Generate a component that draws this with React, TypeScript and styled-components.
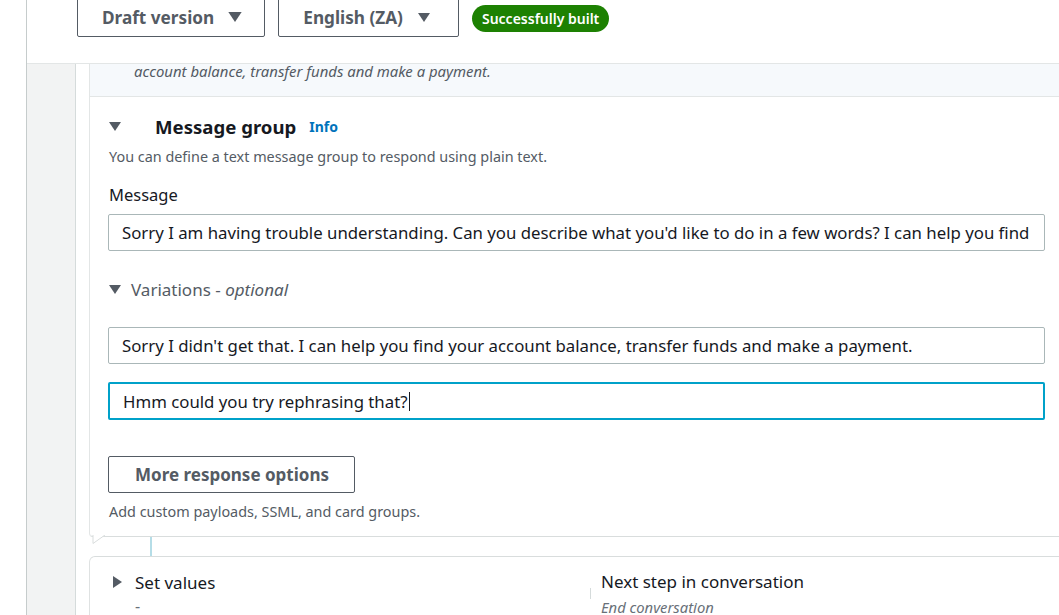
import React from "react";
import styled, { createGlobalStyle } from "styled-components";

const Global = createGlobalStyle`
  html, body { margin: 0; padding: 0; background: #ffffff; overflow: hidden; }
  body { font-family: "Noto Sans", "Open Sans", Arial, sans-serif; color: #16191f; }
  * { box-sizing: border-box; }
`;

const Page = styled.div`
  display: flex;
  width: 1059px;
  height: 615px;
  overflow: hidden;
`;

const LeftMargin = styled.div`
  width: 27px;
  flex: none;
  border-right: 1px solid #c6cccc;
`;

const Main = styled.div`
  display: flex;
  flex-direction: column;
  flex: none;
  width: 1040px;
`;

const Header = styled.div`
  height: 64px;
  flex: none;
  border-bottom: 1px solid #e3e6e6;
  display: flex;
  align-items: flex-start;
  padding-left: 50px;
  gap: 13px;
`;

const Dropdown = styled.div<{ $right: number; $gap: number }>`
  margin-top: -3px;
  height: 40px;
  display: flex;
  align-items: center;
  gap: ${(p) => p.$gap}px;
  padding: 0 ${(p) => p.$right}px 0 24px;
  border: 1px solid #545b64;
  border-radius: 2px;
  font-size: 17.2px;
  font-weight: 700;
  color: #545b64;
`;

const Badge = styled.div`
  margin-top: 5px;
  height: 27px;
  padding: 0 10px;
  display: flex;
  align-items: center;
  border-radius: 14px;
  background: #1d8102;
  color: #ffffff;
  font-size: 14px;
  font-weight: 600;
`;

const Body = styled.div`
  display: flex;
  flex: 1;
  min-height: 0;
`;

const Gutter = styled.div`
  width: 49px;
  flex: none;
  background: #f2f3f3;
  border-right: 1px solid #d5dbdb;
`;

const Content = styled.div`
  margin-left: 13px;
  width: 974px;
  flex: none;
  display: flex;
  flex-direction: column;
  & > * { flex-shrink: 0; }
`;

const PrevSection = styled.div`
  height: 33px;
  background: #f6f9fc;
  border-left: 1px solid #e3e6e6;
  border-bottom: 1px solid #e3e6e6;
  padding-left: 44px;
  font-size: 14.9px;
  font-style: italic;
  color: #545b64;
  line-height: 15px;
`;

const Card = styled.div`
  position: relative;
  display: flex;
  flex-direction: column;
  border-left: 1px solid #e3e6e6;
  border-bottom: 1px solid #d9dddd;
  border-bottom-left-radius: 4px;
  padding: 15px 18px 14px 18px;
`;

const TitleRow = styled.div`
  height: 28px;
  display: flex;
  align-items: center;
`;

const CaretBox = styled.span`
  width: 47px;
  display: inline-flex;
  align-items: center;
  padding-left: 1px;
`;

const Title = styled.span`
  font-size: 18.6px;
  font-weight: 700;
  color: #16191f;
`;

const InfoLink = styled.span`
  margin-left: 13px;
  font-size: 14px;
  font-weight: 700;
  color: #0073bb;
`;

const Description = styled.div<{ $top: number }>`
  margin-top: ${(p) => p.$top}px;
  font-size: 14.4px;
  line-height: 20px;
  color: #545b64;
  padding-left: 1px;
`;

const Label = styled.div`
  margin-top: 16px;
  font-size: 16.5px;
  line-height: 24px;
  padding-left: 1px;
`;

const Field = styled.div<{ $top: number; $focused?: boolean }>`
  margin-top: ${(p) => p.$top}px;
  height: ${(p) => (p.$focused ? 38 : 37)}px;
  display: flex;
  align-items: center;
  padding: 0 13px;
  border: ${(p) => (p.$focused ? "2px solid #00a1c9" : "1px solid #aab7b8")};
  border-radius: 2px;
  font-size: 16.8px;
  color: #16191f;
`;

const FieldText = styled.span`
  display: flex;
  align-items: center;
  flex: 1;
  min-width: 0;
  white-space: nowrap;
  overflow: hidden;
`;

const TextCursor = styled.span`
  display: inline-block;
  flex: none;
  width: 1px;
  height: 19px;
  margin-left: 1px;
  background: #16191f;
`;

const Toggle = styled.div`
  margin-top: 26px;
  height: 24px;
  display: flex;
  align-items: center;
  gap: 10px;
  font-size: 17px;
  color: #545b64;
  padding-left: 1px;
  em { font-style: italic; }
`;

const Button = styled.div`
  margin-top: 36px;
  align-self: flex-start;
  height: 37px;
  padding: 0 25px 0 26px;
  display: flex;
  align-items: center;
  border: 1px solid #545b64;
  border-radius: 2px;
  font-size: 17px;
  font-weight: 700;
  color: #545b64;
`;

const Tail = styled.svg`
  position: absolute;
  left: 2px;
  bottom: -9px;
`;

const Connector = styled.div`
  margin-left: 61px;
  width: 2px;
  height: 19px;
  background: #b5dde7;
`;

const StepCard = styled.div`
  display: grid;
  grid-template-columns: 511px 1fr;
  border-left: 1px solid #dfe2e2;
  border-top: 1px solid #d9dddd;
  border-top-left-radius: 6px;
  padding-top: 13px;
  flex: 1;
`;

const StepColumn = styled.div`
  display: flex;
  flex-direction: column;
  padding-left: 23px;
`;

const StepTitleRow = styled.div`
  height: 24px;
  display: flex;
  align-items: center;
  gap: 13px;
  font-size: 17px;
`;

const StepValue = styled.div<{ $italic?: boolean }>`
  height: 24px;
  line-height: 24px;
  font-size: ${(p) => (p.$italic ? 14.8 : 16)}px;
  font-style: ${(p) => (p.$italic ? "italic" : "normal")};
  color: #687078;
  padding-left: ${(p) => (p.$italic ? 0 : 22)}px;
  margin-top: ${(p) => (p.$italic ? 1 : 0)}px;
`;

const StepLabel = styled.div`
  height: 24px;
  line-height: 24px;
  font-size: 17px;
`;

const ColumnDivider = styled.div`
  position: absolute;
  left: -11px;
  top: 18px;
  width: 1px;
  height: 11px;
  background: #d5dbdb;
`;

const NextColumn = styled.div`
  position: relative;
  display: flex;
  flex-direction: column;
`;

const CaretDown = ({ w = 12 }: { w?: number }) => (
  <svg width={w} height={Math.round(w * 0.72)} viewBox="0 0 12 9">
    <polygon points="0,0 12,0 6,9" fill="#545b64" />
  </svg>
);

const CaretRight = () => (
  <svg width="9" height="12" viewBox="0 0 9 12">
    <polygon points="0,0 9,6 0,12" fill="#545b64" />
  </svg>
);

export default function App() {
  return (
    <>
      <Global />
      <Page>
        <LeftMargin />
        <Main>
          <Header>
            <Dropdown $right={22} $gap={14}>
              <span>Draft version</span>
              <CaretDown w={14} />
            </Dropdown>
            <Dropdown $right={28} $gap={15}>
              <span>English (ZA)</span>
              <CaretDown w={12} />
            </Dropdown>
            <Badge>Successfully built</Badge>
          </Header>
          <Body>
            <Gutter />
            <Content>
              <PrevSection>account balance, transfer funds and make a payment.</PrevSection>
              <Card>
                <TitleRow>
                  <CaretBox>
                    <CaretDown />
                  </CaretBox>
                  <Title>Message group</Title>
                  <InfoLink>Info</InfoLink>
                </TitleRow>
                <Description $top={7}>
                  You can define a text message group to respond using plain text.
                </Description>
                <Label>Message</Label>
                <Field $top={7}>
                  <FieldText>
                    Sorry I am having trouble understanding. Can you describe what you'd like to do in a few words? I can help you find your account balance, transfer funds and make a payment.
                  </FieldText>
                </Field>
                <Toggle>
                  <CaretDown />
                  <span>
                    Variations - <em>optional</em>
                  </span>
                </Toggle>
                <Field $top={26}>
                  <FieldText>
                    Sorry I didn't get that. I can help you find your account balance, transfer funds and make a payment.
                  </FieldText>
                </Field>
                <Field $top={18} $focused>
                  <FieldText>
                    Hmm could you try rephrasing that?
                    <TextCursor />
                  </FieldText>
                </Field>
                <Button>More response options</Button>
                <Description $top={9}>Add custom payloads, SSML, and card groups.</Description>
                <Tail width="14" height="10" viewBox="0 0 14 10">
                  <polygon points="1,0 1,8.5 13,0" fill="#ffffff" />
                  <polyline points="1,0 1,8.5 13,0" fill="none" stroke="#d9dddd" strokeWidth="1" />
                </Tail>
              </Card>
              <Connector />
              <StepCard>
                <StepColumn>
                  <StepTitleRow>
                    <CaretRight />
                    <span>Set values</span>
                  </StepTitleRow>
                  <StepValue>-</StepValue>
                </StepColumn>
                <NextColumn>
                  <ColumnDivider />
                  <StepLabel>Next step in conversation</StepLabel>
                  <StepValue $italic>End conversation</StepValue>
                </NextColumn>
              </StepCard>
            </Content>
          </Body>
        </Main>
      </Page>
    </>
  );
}
